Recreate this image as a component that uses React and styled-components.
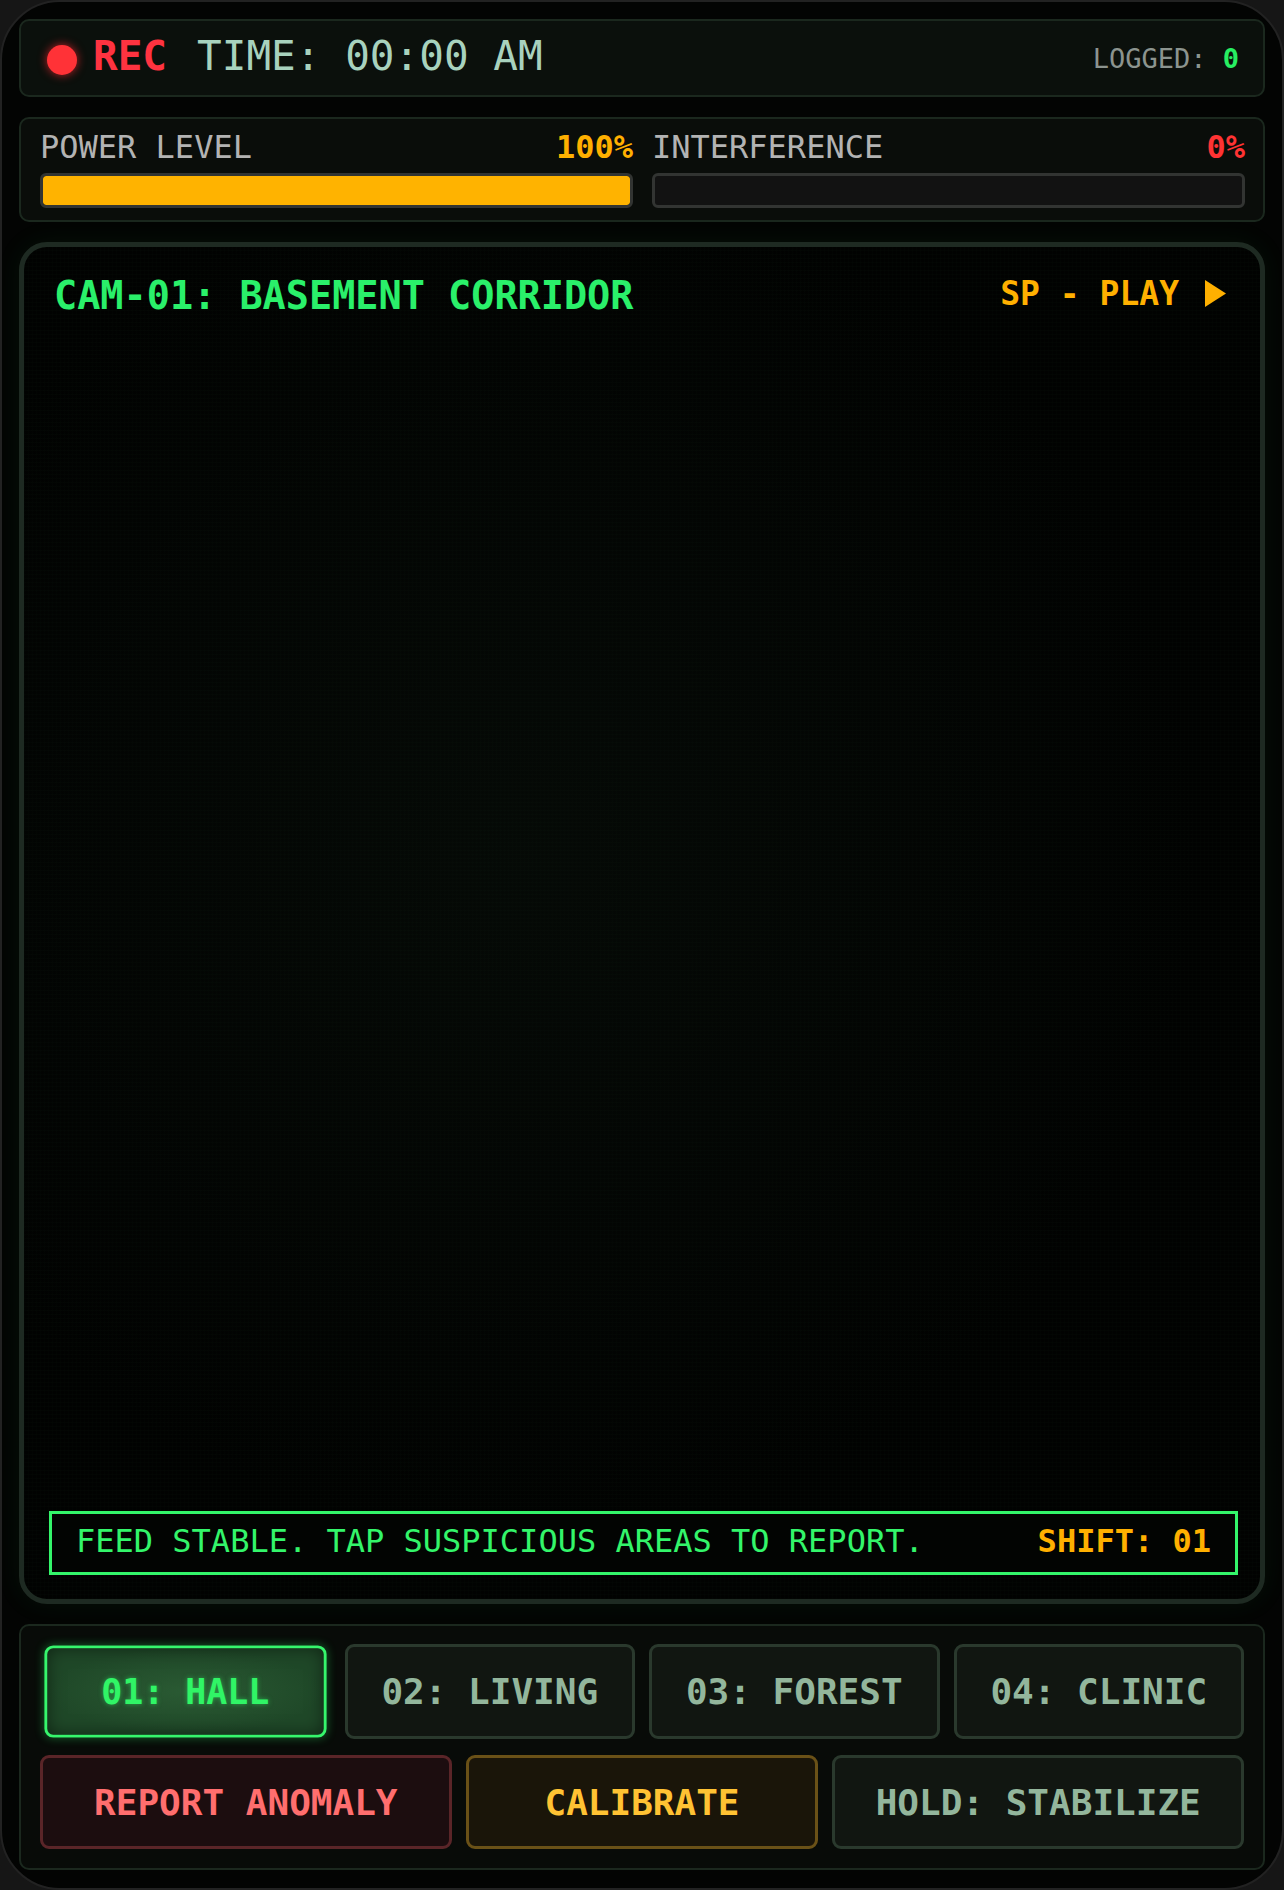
import React from "react";
import styled, { createGlobalStyle } from "styled-components";

const mono = `"DejaVu Sans Mono", "Liberation Mono", monospace`;

const GlobalStyle = createGlobalStyle`
  * { box-sizing: border-box; }
  html, body {
    margin: 0;
    padding: 0;
    background: #161616;
  }
  body {
    font-family: ${mono};
  }
`;

const Device = styled.div`
  width: 1284px;
  height: 1890px;
  border-radius: 60px;
  border: 2px solid #222222;
  background: #030403;
  padding: 17px 17px 18px;
  display: flex;
  flex-direction: column;
  gap: 20px;
  overflow: hidden;
`;

const Panel = styled.div`
  background: #0a0d0a;
  border: 2px solid #1b281e;
  border-radius: 10px;
`;

const TopBar = styled(Panel)`
  height: 78px;
  display: flex;
  align-items: center;
  justify-content: space-between;
  padding: 0 24px 4px 26px;
  background: #0b100c;
`;

const RecGroup = styled.div`
  display: flex;
  align-items: center;
`;

const RecDot = styled.span`
  width: 30px;
  height: 30px;
  border-radius: 50%;
  background: #ff3237;
  box-shadow: 0 0 10px rgba(255, 40, 50, 0.75);
  margin: 8px 16px 0 0;
`;

const RecLabel = styled.span`
  font-size: 41px;
  font-weight: bold;
  color: #ff3340;
  margin-right: 30px;
`;

const Clock = styled.span`
  font-size: 41px;
  color: #a8d2be;
`;

const Logged = styled.span`
  font-size: 27px;
  color: #8c948f;
  margin-top: 4px;
`;

const LoggedCount = styled.b`
  color: #27ee62;
`;

const Meters = styled(Panel)`
  height: 105px;
  display: grid;
  grid-template-columns: 1fr 1fr;
  gap: 19px;
  padding: 10px 18px 0 19px;
`;

const Meter = styled.div`
  display: flex;
  flex-direction: column;
`;

const MeterHead = styled.div`
  display: flex;
  justify-content: space-between;
  align-items: baseline;
  font-size: 32px;
  line-height: 36px;
  color: #b3b3b3;
`;

const MeterValue = styled.b`
  color: ${(p) => p.$color};
`;

const Track = styled.div`
  margin-top: 8px;
  height: 35px;
  border: 3px solid #323432;
  border-radius: 6px;
  background: #121212;
  overflow: hidden;
`;

const Fill = styled.div`
  height: 100%;
  background: #ffb300;
  border-radius: 3px;
`;

const Monitor = styled.div`
  flex: 1;
  display: flex;
  flex-direction: column;
  justify-content: space-between;
  border: 5px solid #1e2a22;
  border-radius: 28px;
  background-color: #010201;
  background-image: radial-gradient(
      ellipse at 40% 45%,
      rgba(20, 36, 24, 0.22) 0%,
      rgba(0, 0, 0, 0) 65%
    ),
    repeating-linear-gradient(
      0deg,
      rgba(40, 80, 50, 0.04) 0px,
      rgba(40, 80, 50, 0.04) 1px,
      transparent 1px,
      transparent 4px
    ),
    repeating-linear-gradient(
      90deg,
      rgba(40, 80, 50, 0.03) 0px,
      rgba(40, 80, 50, 0.03) 1px,
      transparent 1px,
      transparent 4px
    );
  box-shadow: 0 0 28px rgba(40, 200, 90, 0.07);
`;

const MonitorHead = styled.div`
  display: flex;
  justify-content: space-between;
  align-items: center;
  padding: 26px 34px 0 30px;
`;

const CamTitle = styled.span`
  font-size: 38.5px;
  font-weight: bold;
  color: #2af06a;
`;

const PlayTag = styled.span`
  display: flex;
  align-items: center;
  gap: 26px;
  font-size: 33px;
  font-weight: bold;
  color: #ffb000;
  margin-top: -4px;
`;

const StatusBar = styled.div`
  margin: 0 22px 24px 25px;
  height: 64px;
  border: 3px solid #33f56a;
  background: #020402;
  display: flex;
  align-items: center;
  justify-content: space-between;
  padding: 0 24px 4px 24px;
  font-size: 32px;
  color: #33f56a;
`;

const Shift = styled.b`
  color: #ffb000;
`;

const Controls = styled(Panel)`
  height: 246px;
  padding: 18px 19px 0;
  display: flex;
  flex-direction: column;
  gap: 16px;
  background: #080b08;
`;

const ButtonRow = styled.div`
  display: grid;
  grid-template-columns: ${(p) => p.$cols};
  gap: 14px;
`;

const tones = {
  cam: { bg: "#111611", border: "#2a392d", color: "#93b69c" },
  red: { bg: "#1c0d0f", border: "#5a2528", color: "#ff6e6e" },
  amber: { bg: "#1a1509", border: "#6a5117", color: "#ffc233" },
  active: { bg: "#1f4428", border: "#36f56c", color: "#30f566" },
};

const Button = styled.button`
  height: ${(p) => p.$h}px;
  border-radius: 9px;
  border: 3px solid ${(p) => tones[p.$tone].border};
  background: ${(p) => tones[p.$tone].bg};
  color: ${(p) => tones[p.$tone].color};
  font-family: ${mono};
  font-size: 36px;
  font-weight: bold;
  cursor: pointer;
  ${(p) =>
    p.$tone === "active" &&
    `
    transform: scale(0.97);
    background: radial-gradient(ellipse at center, #2a5a33 0%, #1f4828 70%);
    box-shadow: inset 0 0 18px rgba(0, 0, 0, 0.5), 0 0 10px rgba(50, 245, 105, 0.35);
    text-shadow: 0 0 6px rgba(50, 245, 105, 0.5);
  `}
`;

const cams = ["01: HALL", "02: LIVING", "03: FOREST", "04: CLINIC"];

export default function App() {
  return (
    <>
      <GlobalStyle />
      <Device>
        <TopBar>
          <RecGroup>
            <RecDot />
            <RecLabel>REC</RecLabel>
            <Clock>TIME: 00:00 AM</Clock>
          </RecGroup>
          <Logged>
            LOGGED: <LoggedCount>0</LoggedCount>
          </Logged>
        </TopBar>

        <Meters>
          <Meter>
            <MeterHead>
              <span>POWER LEVEL</span>
              <MeterValue $color="#ffb000">100%</MeterValue>
            </MeterHead>
            <Track>
              <Fill style={{ width: "100%" }} />
            </Track>
          </Meter>
          <Meter>
            <MeterHead>
              <span>INTERFERENCE</span>
              <MeterValue $color="#ff3333">0%</MeterValue>
            </MeterHead>
            <Track>
              <Fill style={{ width: "0%" }} />
            </Track>
          </Meter>
        </Meters>

        <Monitor>
          <MonitorHead>
            <CamTitle>CAM-01: BASEMENT CORRIDOR</CamTitle>
            <PlayTag>
              SP - PLAY
              <svg width="21" height="27" viewBox="0 0 21 27">
                <polygon points="0,0 21,13.5 0,27" fill="#ffb000" />
              </svg>
            </PlayTag>
          </MonitorHead>
          <StatusBar>
            <span>FEED STABLE. TAP SUSPICIOUS AREAS TO REPORT.</span>
            <Shift>SHIFT: 01</Shift>
          </StatusBar>
        </Monitor>

        <Controls>
          <ButtonRow $cols="repeat(4, 1fr)">
            {cams.map((c, i) => (
              <Button key={c} $h={95} $tone={i === 0 ? "active" : "cam"}>
                {c}
              </Button>
            ))}
          </ButtonRow>
          <ButtonRow $cols="7fr 6fr 7fr">
            <Button $h={94} $tone="red">REPORT ANOMALY</Button>
            <Button $h={94} $tone="amber">CALIBRATE</Button>
            <Button $h={94} $tone="cam">HOLD: STABILIZE</Button>
          </ButtonRow>
        </Controls>
      </Device>
    </>
  );
}
